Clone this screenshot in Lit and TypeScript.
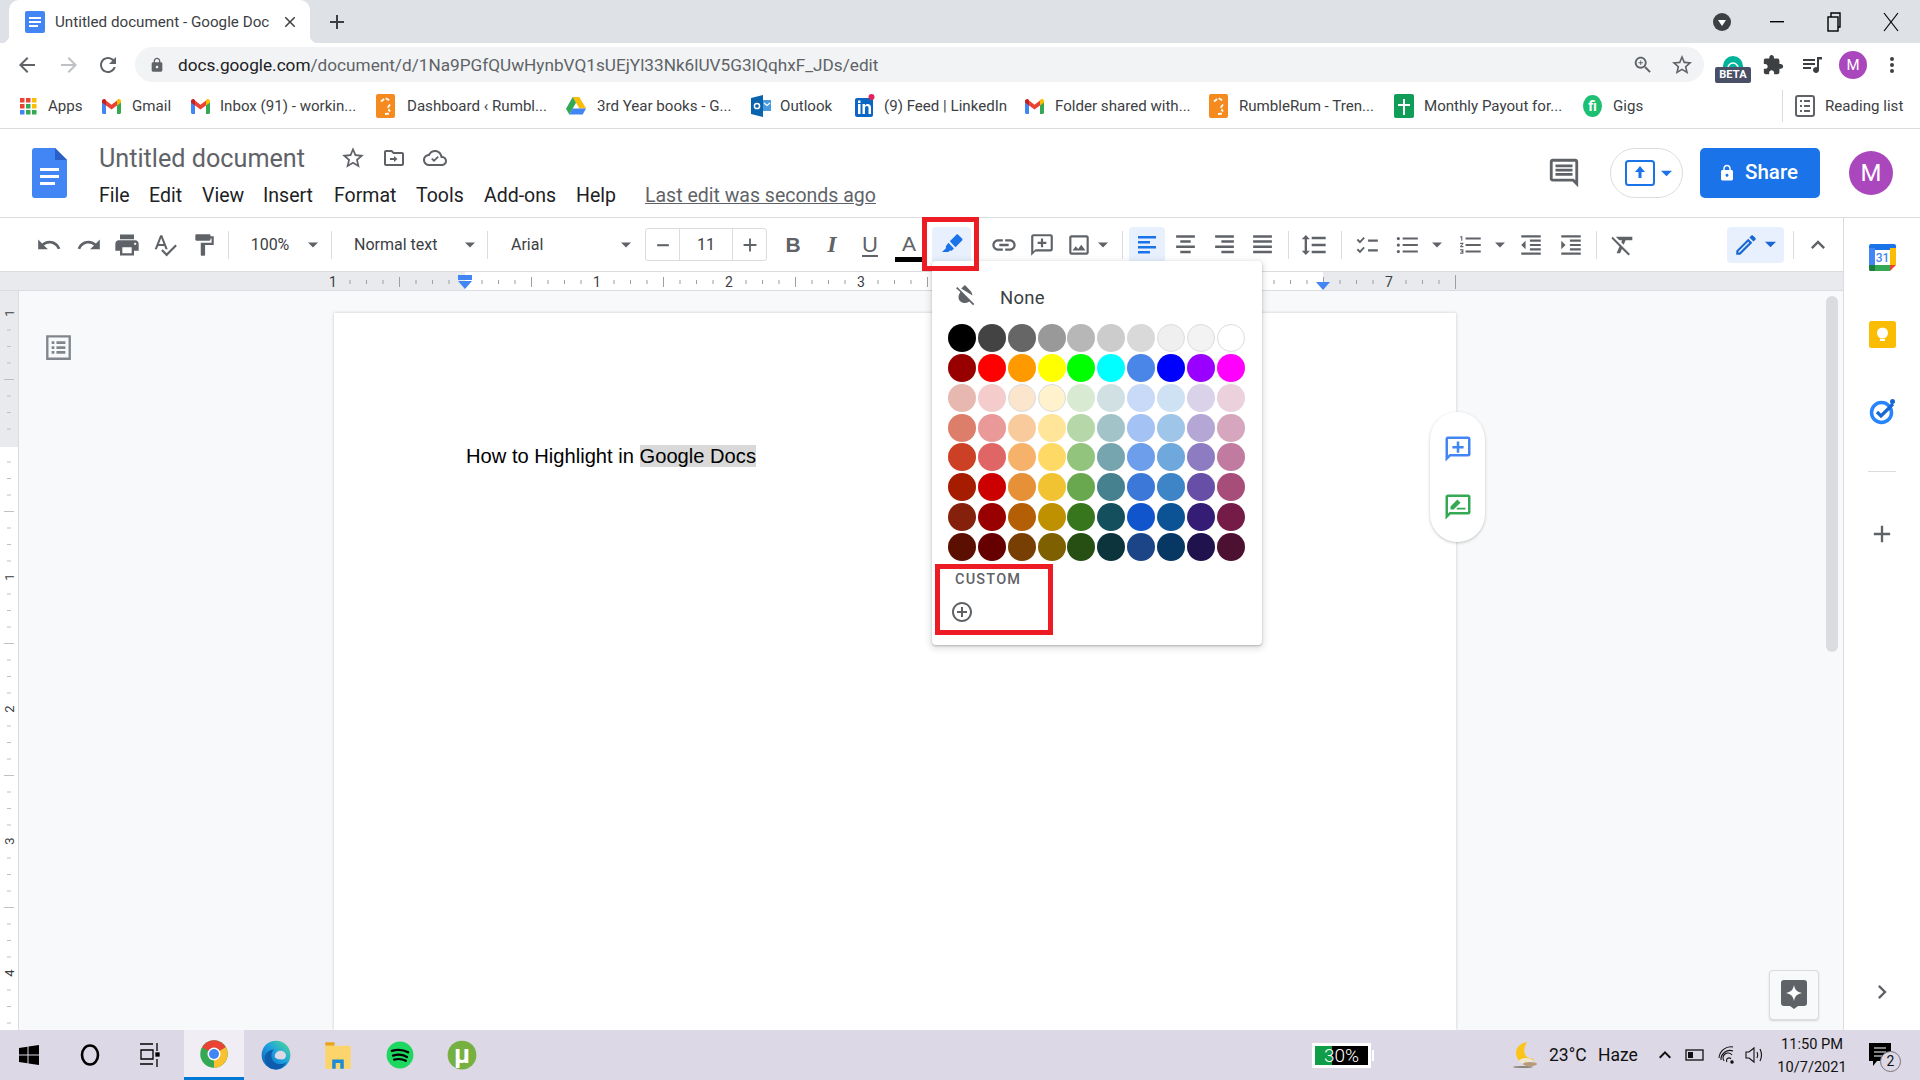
import { LitElement, html, svg, css } from 'lit';
import { customElement } from 'lit/decorators.js';

type Item = { x: number; w: number; c: unknown; cls?: string };

const GRAY = '#5f6368';
const BLUE = '#1a73e8';

// material-ish icon from one path
const ic = (d: string, size = 24, color = GRAY, vb = 24) =>
  html`<svg width=${size} height=${size} viewBox="0 0 ${vb} ${vb}" fill=${color}><path d=${d}></path></svg>`;

const at = (cx: number, w: number, c: unknown, cls = ''): Item => ({ x: cx - w / 2, w, c, cls });

// lays items out in a flex row, the gaps come from the wanted x positions
const flow = (items: Item[], start = 0) => {
  let right = start;
  return items.map((i) => {
    const ml = i.x - right;
    right = i.x + i.w;
    return html`<div class="cell ${i.cls || ''}" style="margin-left:${ml}px;width:${i.w}px">${i.c}</div>`;
  });
};

const P = {
  undo: 'M12.5 8c-2.65 0-5.05.99-6.9 2.6L2 7v9h9l-3.62-3.62c1.39-1.16 3.16-1.88 5.12-1.88 3.54 0 6.55 2.31 7.6 5.5l2.37-.78C21.08 11.03 17.15 8 12.5 8z',
  redo: 'M18.4 10.6C16.55 8.99 14.15 8 11.5 8c-4.65 0-8.58 3.03-9.96 7.22L3.9 16c1.05-3.19 4.05-5.5 7.6-5.5 1.95 0 3.73.72 5.12 1.88L13 16h9V7l-3.6 3.6z',
  print: 'M19 8H5c-1.66 0-3 1.34-3 3v6h4v4h12v-4h4v-6c0-1.66-1.34-3-3-3zm-3 11H8v-5h8v5zm3-7c-.55 0-1-.45-1-1s.45-1 1-1 1 .45 1 1-.45 1-1 1zm-1-9H6v4h12V3z',
  spell: 'M12.45 16h2.09L9.43 3H7.57L2.46 16h2.09l1.12-3h5.64l1.14 3zm-6.02-5L8.5 5.48 10.57 11H6.43zm15.16.59l-8.09 8.09L9.83 16l-1.41 1.41 5.09 5.09L23 13l-1.41-1.41z',
  paint: 'M18 4V3c0-.55-.45-1-1-1H5c-.55 0-1 .45-1 1v4c0 .55.45 1 1 1h12c.55 0 1-.45 1-1V6h1v4H9v11c0 .55.45 1 1 1h2c.55 0 1-.45 1-1v-9h8V4h-3z',
  link: 'M3.9 12c0-1.71 1.39-3.1 3.1-3.1h4V7H7c-2.76 0-5 2.24-5 5s2.24 5 5 5h4v-1.9H7c-1.71 0-3.1-1.39-3.1-3.1zM8 13h8v-2H8v2zm9-6h-4v1.9h4c1.71 0 3.1 1.39 3.1 3.1s-1.39 3.1-3.1 3.1h-4V17h4c2.76 0 5-2.24 5-5s-2.24-5-5-5z',
  comment: 'M20 2H4c-1.1 0-2 .9-2 2v18l4-4h14c1.1 0 2-.9 2-2V4c0-1.1-.9-2-2-2zm0 14H6l-2 2V4h16v12zM11 6h2v3h3v2h-3v3h-2v-3H8V9h3z',
  image: 'M19 5v14H5V5h14m0-2H5c-1.1 0-2 .9-2 2v14c0 1.1.9 2 2 2h14c1.1 0 2-.9 2-2V5c0-1.1-.9-2-2-2zm-4.86 8.86l-3 3.87L9 13.14 6 17h12l-3.86-5.14z',
  alignL: 'M3 3h18v2.4H3zM3 8h12v2.4H3zM3 13h18v2.4H3zM3 18h12v2.4H3z',
  alignC: 'M3 3h18v2.4H3zM7 8h10v2.4H7zM3 13h18v2.4H3zM7 18h10v2.4H7z',
  alignR: 'M3 3h18v2.4H3zM9 8h12v2.4H9zM3 13h18v2.4H3zM9 18h12v2.4H9z',
  justify: 'M3 3h18v2.4H3zM3 8h18v2.4H3zM3 13h18v2.4H3zM3 18h18v2.4H3z',
  spacing: 'M6 7h2.5L5 3.5 1.5 7H4v10H1.5L5 20.5 8.5 17H6V7zm4-2v2h12V5H10zm0 14h12v-2H10v2zm0-6h12v-2H10v2z',
  check: 'M2.5 7.5l1.2-1.2 1.8 1.8 3.3-3.5 1.2 1.2-4.5 4.7zM2.5 16.5l1.2-1.2 1.8 1.8 3.3-3.5 1.2 1.2-4.5 4.7zM13 7h9v2h-9zM13 16h9v2h-9z',
  bullets: 'M4 10.5a1.5 1.5 0 1 0 0 3 1.5 1.5 0 0 0 0-3zm0-6a1.5 1.5 0 1 0 0 3 1.5 1.5 0 0 0 0-3zm0 12a1.5 1.5 0 1 0 0 3 1.5 1.5 0 0 0 0-3zM8 5h14v2H8zm0 6h14v2H8zm0 6h14v2H8z',
  numbers: 'M2 17h2v.5H3v1h1v.5H2v1h3v-4H2v1zm1-9h1V4H2v1h1v3zm-1 3h1.8L2 13.1v.9h3v-1H3.2L5 10.9V10H2v1zm5-6v2h14V5H7zm0 14h14v-2H7v2zm0-6h14v-2H7v2z',
  outdent: 'M11 17h10v-2H11v2zm-8-5l4 4V8l-4 4zm0 9h18v-2H3v2zM3 3v2h18V3H3zm8 6h10V7H11v2zm0 4h10v-2H11v2z',
  indent: 'M3 21h18v-2H3v2zM3 8v8l4-4-4-4zm8 9h10v-2H11v2zM3 3v2h18V3H3zm8 6h10V7H11v2zm0 4h10v-2H11v2z',
  clear: 'M3.27 5L2 6.27l6.97 6.97L6.5 19h3l1.57-3.66L16.73 21 18 19.73 3.55 5.27 3.27 5zM6 5v.18L8.82 8h2.4l-.72 1.68 2.1 2.1L14.21 8H20V5H6z',
  pencil: 'M14.06 9.02l.92.92L5.92 19H5v-.92l9.06-9.06M17.66 3c-.25 0-.51.1-.7.29l-1.83 1.83 3.75 3.75 1.83-1.83c.39-.39.39-1.02 0-1.41l-2.34-2.34c-.2-.2-.45-.29-.71-.29zm-3.6 3.19L3 17.25V21h3.75L17.81 9.94l-3.75-3.75z',
  marker: 'M10 8.6l6-6.1c.5-.5 1.2-.5 1.7 0l3.6 3.6c.5.5.5 1.2 0 1.7l-6.1 6.2zM8.7 10l5.1 5.2-2 2-1.7-.2-1.5 1.5H2.8l3.6-3.6-.1-1.7z',
  star: 'M22 9.24l-7.19-.62L12 2 9.19 8.63 2 9.24l5.46 4.73L5.82 21 12 17.27 18.18 21l-1.63-7.03L22 9.24zM12 15.4l-3.76 2.27 1-4.28-3.32-2.88 4.38-.38L12 6.1l1.71 4.04 4.38.38-3.32 2.88 1 4.28L12 15.4z',
  cloud: 'M19.35 10.04C18.67 6.59 15.64 4 12 4 9.11 4 6.6 5.64 5.35 8.04 2.34 8.36 0 10.91 0 14c0 3.31 2.69 6 6 6h13c2.76 0 5-2.24 5-5 0-2.64-2.05-4.78-4.65-4.96zM19 18H6c-2.21 0-4-1.79-4-4 0-2.05 1.53-3.76 3.56-3.97l1.07-.11.5-.95C8.08 7.14 9.94 6 12 6c2.62 0 4.88 1.86 5.39 4.43l.3 1.5 1.53.11c1.56.1 2.78 1.41 2.78 2.96 0 1.65-1.35 3-3 3zm-8-2l-2.8-2.8 1.2-1.2 1.6 1.6 3.6-3.6 1.2 1.2z',
  move: 'M20 6h-8l-2-2H4c-1.1 0-2 .9-2 2v12c0 1.1.9 2 2 2h16c1.1 0 2-.9 2-2V8c0-1.1-.9-2-2-2zm0 12H4V6h5.17l2 2H20v10zM12 10v2H8v2h4v2l3.5-3z',
  back: 'M20 11H7.83l5.59-5.59L12 4l-8 8 8 8 1.41-1.41L7.83 13H20v-2z',
  fwd: 'M12 4l-1.41 1.41L16.17 11H4v2h12.17l-5.58 5.59L12 20l8-8z',
  reload: 'M17.65 6.35C16.2 4.9 14.21 4 12 4c-4.42 0-7.99 3.58-7.99 8s3.57 8 7.99 8c3.73 0 6.84-2.55 7.73-6h-2.08c-.82 2.33-3.04 4-5.65 4-3.31 0-6-2.69-6-6s2.69-6 6-6c1.66 0 3.14.69 4.22 1.78L13 11h7V4l-2.35 2.35z',
  lock: 'M18 8h-1V6c0-2.76-2.24-5-5-5S7 3.24 7 6v2H6c-1.1 0-2 .9-2 2v10c0 1.1.9 2 2 2h12c1.1 0 2-.9 2-2V10c0-1.1-.9-2-2-2zM9 6c0-1.66 1.34-3 3-3s3 1.34 3 3v2H9V6zm3 11c-1.1 0-2-.9-2-2s.9-2 2-2 2 .9 2 2-.9 2-2 2z',
  zoom: 'M15.5 14h-.79l-.28-.27C15.41 12.59 16 11.11 16 9.5 16 5.91 13.09 3 9.5 3S3 5.91 3 9.5 5.91 16 9.5 16c1.61 0 3.09-.59 4.23-1.57l.27.28v.79l5 4.99L20.49 19l-4.99-5zm-6 0C7.01 14 5 11.99 5 9.5S7.01 5 9.5 5 14 7.01 14 9.5 11.99 14 9.5 14zM12 10h-2v2H9v-2H7V9h2V7h1v2h2z',
  puzzle: 'M20.5 11H19V7c0-1.1-.9-2-2-2h-4V3.5C13 2.12 11.88 1 10.5 1S8 2.12 8 3.5V5H4c-1.1 0-1.99.9-1.99 2v3.8H3.5c1.49 0 2.7 1.21 2.7 2.7s-1.21 2.7-2.7 2.7H2V20c0 1.1.9 2 2 2h3.8v-1.5c0-1.49 1.21-2.7 2.7-2.7 1.49 0 2.7 1.21 2.7 2.7V22H17c1.1 0 2-.9 2-2v-4h1.5c1.38 0 2.5-1.12 2.5-2.5S21.88 11 20.5 11z',
  queue: 'M3 6h12v2H3zM3 10h12v2H3zM3 14h8v2H3zM17 4h5v2.5h-3V17a3 3 0 1 1-2-2.8z',
  dots: 'M12 8a2 2 0 1 0 0-4 2 2 0 0 0 0 4zm0 2a2 2 0 1 0 0 4 2 2 0 0 0 0-4zm0 6a2 2 0 1 0 0 4 2 2 0 0 0 0-4z',
  close: 'M19 6.41L17.59 5 12 10.59 6.41 5 5 6.41 10.59 12 5 17.59 6.41 19 12 13.41 17.59 19 19 17.59 13.41 12z',
  plus: 'M19 13h-6v6h-2v-6H5v-2h6V5h2v6h6z',
  chevUp: 'M12 8l-6 6 1.41 1.41L12 10.83l4.59 4.58L18 14z',
  chevR: 'M10 6L8.59 7.41 13.17 12l-4.58 4.59L10 18l6-6z',
  notes: 'M21.99 4c0-1.1-.89-2-1.99-2H4c-1.1 0-2 .9-2 2v12c0 1.1.9 2 2 2h14l4 4-.01-18zM20 4v13.17L18.83 16H4V4h16zM6 12h12v2H6zm0-3h12v2H6zm0-3h12v2H6z',
  addCircle: 'M13 7h-2v4H7v2h4v4h2v-4h4v-2h-4V7zm-1-5C6.48 2 2 6.48 2 12s4.48 10 10 10 10-4.48 10-10S17.52 2 12 2zm0 18c-4.41 0-8-3.59-8-8s3.59-8 8-8 8 3.59 8 8-3.59 8-8 8z',
  noFill: 'M3 4.3L4.3 3l17 17-1.3 1.3-3.7-3.7c-1 .9-2.5 1.4-4.3 1.4-3.8 0-6.5-2.4-6.5-6 0-1.6.8-3.3 1.9-5zM8.2 4.5L12 1l6 6.5c.8 1.4 1.4 2.8 1.5 4z',
  outline: 'M3 3h18v18H3zm1.7 1.7v14.6h14.6V4.700zM7 7.500h2v2H7zM10.500 7.500H17v2h-6.500zM7 11h2v2H7zM10.500 11H17v2h-6.500zM7 14.500h2v2H7zM10.500 14.500H17v2h-6.500z',
  addPlain: 'M20 2H4a2 2 0 0 0-2 2v18l4-4h14a2 2 0 0 0 2-2V4a2 2 0 0 0-2-2zm0 14H5.2L4 17.2V4h16zM11 6h2v3.5h3.5v2H13V15h-2v-3.5H7.5v-2H11z',
  suggest: 'M20 2H4a2 2 0 0 0-2 2v18l4-4h14a2 2 0 0 0 2-2V4a2 2 0 0 0-2-2zm0 14H5.2L4 17.2V4h16zM6 14v-2.500l5.500-5.500 2.500 2.500L8.500 14zM11 12.500h7V14h-7z',
};

const caret = (color = GRAY, size = 10) =>
  html`<svg width=${size} height=${size} viewBox="0 0 10 10" fill=${color}><path d="M0 2.5h10L5 7.5z"></path></svg>`;

const gmail = html`<svg width="19" height="17" viewBox="0 0 19 15">
  <path d="M0 2v11.5C0 14.3.7 15 1.5 15H4V6z" fill="#4285f4"></path>
  <path d="M19 2v11.500c0 .8-.7 1.500-1.500 1.500H15V6z" fill="#34a853"></path>
  <path d="M4 6.500V1.500L9.500 5.800 15 1.500v5l-5.500 4z" fill="#ea4335"></path>
  <path d="M0 2.200C0 .5 2 -.5 3.300.5L4 1v5.500L0 3.500z" fill="#c5221f"></path>
  <path d="M19 2.200c0-1.700-2-2.700-3.300-1.700L15 1v5.500l4-3z" fill="#fbbc04"></path></svg>`;

const rumble = html`<svg width="19" height="24" viewBox="0 0 19 24">
  <rect width="19" height="24" rx="2" fill="#f58a1f"></rect>
  <path d="M5 7.500L9.500 4l4 2.500M14 10.500l-2.500 3.500 2.500 3.500M9 20l4.500-.5" stroke="#fff" stroke-width="1.800" fill="none" stroke-dasharray="4 2"></path></svg>`;

const drive = html`<svg width="20" height="18" viewBox="0 0 20 18">
  <path d="M6.700 0h6.600L20 11.500h-6.600z" fill="#fbbc04"></path>
  <path d="M6.700 0l3.300 5.700L3.300 17.500 0 11.800z" fill="#34a853"></path>
  <path d="M6.500 11.500H20l-3.300 6H3.300z" fill="#4285f4"></path></svg>`;

const outlook = html`<svg width="20" height="22" viewBox="0 0 20 22">
  <rect x="9" y="5" width="11" height="11" fill="#4a9ae0"></rect>
  <path d="M0 3l12-3v22L0 19z" fill="#0a64ad"></path>
  <circle cx="6" cy="11" r="2.600" fill="none" stroke="#fff" stroke-width="1.500"></circle>
  <path d="M13 8l3 2.500 3-2.500" fill="none" stroke="#fff" stroke-width="1.200"></path></svg>`;

const linkedin = html`<svg width="20" height="24" viewBox="0 0 20 24">
  <rect y="4" width="18" height="19" rx="2" fill="#0a66c2"></rect>
  <circle cx="16.500" cy="3" r="3" fill="#e0245e"></circle>
  <path d="M3 10h2.500v10H3zM3 6.500h2.500V9H3zM7.500 10H10v1.500c.6-1 1.500-1.600 2.700-1.600 2 0 3.300 1.200 3.300 3.700V20h-2.500v-6c0-1.200-.5-1.900-1.600-1.900-1.200 0-1.900.9-1.900 2.200V20H7.500z" fill="#fff"></path></svg>`;

const sheets = html`<svg width="20" height="24" viewBox="0 0 20 24">
  <rect width="20" height="24" rx="2" fill="#0f9d58"></rect>
  <path d="M9 5h2v5h5v2h-5v9H9v-9H4v-2h5z" fill="#fff"></path></svg>`;

const fiverr = html`<svg width="19" height="24" viewBox="0 0 19 24">
  <ellipse cx="9.500" cy="12" rx="9.500" ry="11" fill="#1dbf73"></ellipse>
  <text x="9.500" y="17" text-anchor="middle" font-family="Roboto, sans-serif" font-size="14" font-weight="700" fill="#fff">fi</text></svg>`;

const appsGrid = html`<svg width="17" height="17" viewBox="0 0 17 17">
  ${[0, 6, 12].map((y, r) => [0, 6, 12].map((x, c) => svg`<rect x=${x} y=${y} width="4.500" height="4.500"
    fill=${[['#ea4335', '#ea4335', '#fbbc04'], ['#ea4335', '#34a853', '#fbbc04'], ['#4285f4', '#34a853', '#34a853']][r][c]}></rect>`))}</svg>`;

const marks = [
  { icon: appsGrid, x: 20, ic: 17, tx: 48, tw: 40, t: 'Apps' },
  { icon: gmail, x: 102, ic: 19, tx: 132, tw: 40, t: 'Gmail' },
  { icon: gmail, x: 191, ic: 19, tx: 220, tw: 140, t: 'Inbox (91) - workin...' },
  { icon: rumble, x: 376, ic: 19, tx: 407, tw: 145, t: 'Dashboard ‹ Rumbl...' },
  { icon: drive, x: 566, ic: 20, tx: 597, tw: 140, t: '3rd Year books - G...' },
  { icon: outlook, x: 751, ic: 20, tx: 780, tw: 60, t: 'Outlook' },
  { icon: linkedin, x: 855, ic: 20, tx: 884, tw: 125, t: '(9) Feed | LinkedIn' },
  { icon: gmail, x: 1025, ic: 19, tx: 1055, tw: 140, t: 'Folder shared with...' },
  { icon: rumble, x: 1209, ic: 19, tx: 1239, tw: 140, t: 'RumbleRum - Tren...' },
  { icon: sheets, x: 1394, ic: 20, tx: 1424, tw: 145, t: 'Monthly Payout for...' },
  { icon: fiverr, x: 1583, ic: 19, tx: 1613, tw: 40, t: 'Gigs' },
];

const toolbarItems = (): Item[] => [
  at(49, 26, ic(P.undo, 26)),
  at(88.500, 26, ic(P.redo, 26)),
  at(127, 28, ic(P.print, 28)),
  at(165, 26, ic(P.spell, 26)),
  at(204, 26, ic(P.paint, 26)),
  at(228.5, 1, '', 'sep'),
  at(270, 44, '100%', 'tb-text'),
  at(313, 10, caret()),
  at(331.5, 1, '', 'sep'),
  { x: 354, w: 90, c: 'Normal text', cls: 'tb-text left' },
  at(470, 10, caret()),
  at(487.5, 1, '', 'sep'),
  { x: 511, w: 50, c: 'Arial', cls: 'tb-text left' },
  at(626, 10, caret()),
  {
    x: 645, w: 122, cls: 'stepper',
    c: html`<div class="st-btn">${ic('M5 11h14v2.500H5z', 20)}</div><div class="st-val">11</div><div class="st-btn">${ic(P.plus, 22)}</div>`,
  },
  at(793, 24, 'B', 'fmt bold'),
  at(832, 24, 'I', 'fmt italic'),
  at(870, 24, 'U', 'fmt under'),
  at(909, 28, html`<div class="color-a"><span>A</span><i></i></div>`),
  at(951.5, 39, ic(P.marker, 26, BLUE), 'active tall'),
  at(1004, 28, ic(P.link, 28)),
  at(1042, 26, ic(P.comment, 26)),
  at(1079, 26, ic(P.image, 26)),
  at(1103, 10, caret()),
  at(1122.5, 1, '', 'sep'),
  at(1147, 36, ic(P.alignL, 24, BLUE), 'active'),
  at(1185, 26, ic(P.alignC, 25)),
  at(1224, 26, ic(P.alignR, 25)),
  at(1262, 26, ic(P.justify, 25)),
  at(1288.5, 1, '', 'sep'),
  at(1314, 28, ic(P.spacing, 28)),
  at(1341.5, 1, '', 'sep'),
  at(1367, 26, ic(P.check, 26)),
  at(1407, 26, ic(P.bullets, 26)),
  at(1437, 10, caret()),
  at(1471, 26, ic(P.numbers, 26)),
  at(1500, 10, caret()),
  at(1531, 26, ic(P.outdent, 26)),
  at(1571, 26, ic(P.indent, 26)),
  at(1596.5, 1, '', 'sep'),
  at(1623, 28, ic(P.clear, 28)),
  {
    x: 1727, w: 57, cls: 'active mode',
    c: html`${ic(P.pencil, 26, '#1967d2')}${caret('#1967d2', 11)}`,
  },
  at(1793.5, 1, '', 'sep'),
  at(1818, 28, ic(P.chevUp, 28)),
];

const swatches = [
  '000000 434343 666666 999999 b7b7b7 cccccc d9d9d9 efefef f3f3f3 ffffff',
  '980000 ff0000 ff9900 ffff00 00ff00 00ffff 4a86e8 0000ff 9900ff ff00ff',
  'e6b8af f4cccc fce5cd fff2cc d9ead3 d0e0e3 c9daf8 cfe2f3 d9d2e9 ead1dc',
  'dd7e6b ea9999 f9cb9c ffe599 b6d7a8 a2c4c9 a4c2f4 9fc5e8 b4a7d6 d5a6bd',
  'cc4125 e06666 f6b26b ffd966 93c47d 76a5af 6d9eeb 6fa8dc 8e7cc3 c27ba0',
  'a61c00 cc0000 e69138 f1c232 6aa84f 45818e 3c78d8 3d85c6 674ea7 a64d79',
  '85200c 990000 b45f06 bf9000 38761d 134f5c 1155cc 0b5394 351c75 741b47',
  '5b0f00 660000 783f04 7f6000 274e13 0c343d 1c4587 073763 20124d 4c1130',
].join(' ').split(' ');
const ringed = ['efefef', 'f3f3f3', 'ffffff', 'fce5cd', 'fff2cc'];

const hRuler = () => {
  const ticks = [];
  for (let i = 1; i < 68; i++) {
    if (i % 8 === 0) continue;
    const x = 333 + i * 16.5;
    const long = i % 8 === 4;
    ticks.push(svg`<rect x=${x} y=${long ? 5 : 8} width="1" height=${long ? 10 : 4} fill="#9aa0a6"></rect>`);
  }
  const nums: [number, string][] = [[333, '1'], [597, '1'], [729, '2'], [861, '3'], [1389, '7']];
  return html`<svg width="1843" height="20" viewBox="0 0 1843 20">
    <rect x="465" width="858" height="20" fill="#fff"></rect>
    ${ticks}
    <rect x="1455" y="3" width="1" height="14" fill="#9aa0a6"></rect>
    ${nums.map(([x, t]) => svg`<text x=${x} y="15" text-anchor="middle" font-family="Roboto, sans-serif" font-size="14" fill="#3c4043">${t}</text>`)}
    <path d="M458 3h14v5h-14zM458 9h14l-7 8z" fill="#4285f4"></path>
    <path d="M1316 10h14l-7 8z" fill="#4285f4"></path>
  </svg>`;
};

const vRuler = () => {
  const ticks = [];
  for (let i = 1; i < 44; i++) {
    if (i % 8 === 0) continue;
    const y = 22 + i * 16.5;
    const long = i % 8 === 4;
    ticks.push(svg`<rect x=${long ? 4 : 7} y=${y} width=${long ? 10 : 4} height="1" fill="#bdc1c6"></rect>`);
  }
  return html`<svg width="18" height="739" viewBox="0 0 18 739">
    <rect width="18" height="156" fill="#e8eaed"></rect>
    ${ticks}
    <text transform="translate(14 22) rotate(-90)" text-anchor="middle" font-family="Roboto, sans-serif" font-size="13" fill="#3c4043">1</text>
    ${[1, 2, 3, 4].map((n) => svg`<text transform="translate(14 ${154 + 132 * n}) rotate(-90)" text-anchor="middle" font-family="Roboto, sans-serif" font-size="13" fill="#3c4043">${n}</text>`)}
  </svg>`;
};

const chrome = html`<svg width="30" height="32" viewBox="0 0 24 24">
  <circle cx="12" cy="12" r="11" fill="#34a853"></circle>
  <path d="M12 12L2.500 6.500A11 11 0 0 1 21.500 6.500z" fill="#ea4335"></path>
  <path d="M12 12l9.500-5.500A11 11 0 0 1 12 23z" fill="#fbc02d"></path>
  <circle cx="12" cy="12" r="5.200" fill="#fff"></circle><circle cx="12" cy="12" r="4" fill="#4285f4"></circle></svg>`;

const edge = html`<svg width="30" height="36" viewBox="0 0 24 24">
  <defs><linearGradient id="eg" x1="0" y1="1" x2="1" y2="0"><stop offset="0" stop-color="#0c59a4"></stop><stop offset=".5" stop-color="#1b9de2"></stop><stop offset="1" stop-color="#4fe08f"></stop></linearGradient></defs>
  <circle cx="12" cy="12" r="11.500" fill="url(#eg)"></circle>
  <path d="M11 13c0-2.500 2-4.500 4.500-4.500 2.700 0 4.500 1.800 4.500 3.800 0 2-1.500 3.200-3.500 3.200-3.500 0-5.500-1-5.500-2.500z" fill="#ddd8e5"></path>
  <path d="M3 14c.5-4 4-6.500 7.500-6.500-2.500 2-3.500 7 .5 10.500 2 1.500 6 2 9.500-.5-2 4-5.500 6-9 6-5 0-8.500-4.500-8.500-9.500z" fill="#0d5cad"></path></svg>`;

const folder = html`<svg width="28" height="30" viewBox="0 0 24 26">
  <path d="M1 2h8v3H1z" fill="#e8a317"></path>
  <path d="M1 5h22v20H1z" fill="#fbd56b"></path>
  <path d="M7 25v-8h10v8h-3v-5h-4v5z" fill="#1f8ad6"></path></svg>`;

const spotify = html`<svg width="28" height="32" viewBox="0 0 24 24">
  <circle cx="12" cy="12" r="11.500" fill="#1ed760"></circle>
  <path d="M5 8.500c5-1.500 10-1 14 1.200M6 12.500c4-1.200 8.500-.8 12 1.200M7 16c3.500-1 7-.6 10 1" stroke="#000" stroke-width="1.900" stroke-linecap="round" fill="none"></path></svg>`;

const utorrent = html`<svg width="30" height="34" viewBox="0 0 24 24">
  <circle cx="12" cy="12" r="11.500" fill="#76b041"></circle>
  <text x="12" y="18" text-anchor="middle" font-family="Roboto, sans-serif" font-size="21" font-weight="700" fill="#fff">µ</text></svg>`;

const windows = html`<svg width="20" height="20" viewBox="0 0 20 20"><path d="M0 3l8.500-1.300V9.500H0zM9.500 1.500L20 0v9.500H9.500zM0 10.500h8.500v7.800L0 17zM9.500 10.500H20V20L9.500 18.500z" fill="#000"></path></svg>`;

const moon = html`<svg width="30" height="30" viewBox="0 0 30 30">
  <path d="M18 2c-3 5-4 10-1 14 2 2 5 3 8 3-2 3-6 5-10 4-5-1-8-5-8-10 0-5 4-10 11-11z" fill="#fcc419"></path>
  <ellipse cx="17" cy="21" rx="7" ry="3" fill="#efe6d2"></ellipse><ellipse cx="21" cy="24" rx="7" ry="2" fill="#b89b78"></ellipse>
  <ellipse cx="14" cy="27" rx="10" ry="1" fill="#8d8577"></ellipse></svg>`;

const calendar = html`<svg width="27" height="27" viewBox="0 0 27 27">
  <rect width="27" height="27" rx="2" fill="#fff"></rect>
  <path d="M0 2a2 2 0 0 1 2-2h23a2 2 0 0 1 2 2v4H0z" fill="#1a73e8"></path>
  <path d="M0 4h6v23H2a2 2 0 0 1-2-2z" fill="#4285f4"></path>
  <path d="M21 4h6v17h-6z" fill="#fbbc04"></path>
  <path d="M0 21h21v6H2a2 2 0 0 1-2-2z" fill="#34a853"></path>
  <path d="M0 21h6v6H2a2 2 0 0 1-2-2z" fill="#188038"></path>
  <path d="M21 21h6l-6 6z" fill="#ea4335"></path>
  <text x="13.500" y="18" text-anchor="middle" font-family="Roboto, sans-serif" font-size="12" font-weight="500" fill="#4285f4">31</text></svg>`;

const keep = html`<svg width="27" height="27" viewBox="0 0 27 27">
  <rect width="27" height="27" rx="2.500" fill="#fbbc04"></rect>
  <circle cx="13.500" cy="12" r="5.500" fill="#fff"></circle><rect x="11" y="18" width="5" height="2" fill="#fff"></rect></svg>`;

const tasks = html`<svg width="27" height="27" viewBox="0 0 27 27">
  <circle cx="12.500" cy="14.500" r="10" fill="none" stroke="#2684fc" stroke-width="3.500"></circle>
  <path d="M8 14l4 4 12-12" fill="none" stroke="#1967d2" stroke-width="3.200"></path>
  <circle cx="23.500" cy="3.500" r="2.500" fill="#1967d2"></circle></svg>`;

@customElement('app-root')
export class AppRoot extends LitElement {
  static styles = css`
    :host {
      display: flex;
      flex-direction: column;
      position: relative;
      width: 1920px;
      height: 1080px;
      overflow: hidden;
      background: #fff;
      font-family: Roboto, 'Noto Sans', sans-serif;
      color: #3c4043;
    }
    svg { display: block; flex: none; }
    .cell {
      flex: none;
      display: flex;
      align-items: center;
      justify-content: center;
      white-space: nowrap;
    }
    .row { display: flex; align-items: center; }

    /* chrome */
    .tabstrip { height: 43px; background: #dee1e6; flex: none; }
    .tab {
      height: 43px;
      align-self: flex-end;
      background: #fff;
      border-radius: 10px 10px 0 0;
      position: relative;
      justify-content: flex-start;
      font-size: 15.2px;
      color: #3c4043;
    }
    .tab::before, .tab::after {
      content: '';
      position: absolute;
      bottom: 0;
      width: 8px;
      height: 8px;
    }
    .tab::before { left: -8px; background: radial-gradient(circle at 0 0, transparent 8px, #fff 8.5px); }
    .tab::after { right: -8px; background: radial-gradient(circle at 100% 0, transparent 8px, #fff 8.5px); }
    .fav { margin-left: 16px; margin-right: 10px; }
    .tab-title { width: 217px; overflow: hidden; margin-right: 9px; }
    .navbar { height: 43px; flex: none; }
    .omni {
      height: 35px;
      background: #f1f3f4;
      border-radius: 18px;
      justify-content: flex-start;
      font-size: 17.2px;
      color: #5f6368;
    }
    .omni .lock { margin: 0 13px 0 14px; }
    .omni b { font-weight: 400; color: #202124; }
    .omni .grow { flex: 1; }
    .omni .star { margin: 0 10px 0 16px; }
    .beta { position: relative; height: 36px; align-items: flex-start; }
    .beta svg { margin-top: 8px; }
    .beta span {
      position: absolute;
      left: -3px;
      right: -3px;
      bottom: 0;
      height: 16px;
      background: #4a4f68;
      border-radius: 2px;
      color: #fff;
      font-size: 11px;
      line-height: 16px;
      font-weight: 700;
      text-align: center;
      letter-spacing: .2px;
    }
    .avatar-s {
      height: 28px;
      border-radius: 50%;
      background: #ab47bc;
      color: #fff;
      font-size: 15px;
    }
    .bookmarks {
      height: 40px;
      padding-bottom: 2px;
      flex: none;
      border-bottom: 1px solid #dadce0;
      font-size: 15.1px;
      color: #3c4043;
    }
    .mark { justify-content: flex-start; }
    .sep-b { height: 32px; background: #dadce0; }

    /* docs header */
    .head { height: 88px; flex: none; border-bottom: 1px solid #dadce0; }
    .head-title { font-size: 25.2px; color: #5f6368; justify-content: flex-start; }
    .menu { font-size: 19.5px; color: #202124; justify-content: flex-start; }
    .last { color: #5f6368; text-decoration: underline; }
    .logo { flex: none; margin-left: 32px; }
    .docs-meta { width: 1100px; margin-left: 32px; flex: none; align-self: flex-start; }
    .head-top { height: 58px; }
    .head-bottom { height: 16px; }
    .pill {
      height: 50px;
      box-sizing: border-box;
      border: 1px solid #dadce0;
      border-radius: 25px;
      gap: 6px;
      padding-left: 4px;
    }
    .share {
      height: 50px;
      border-radius: 5px;
      background-color: #1a73e8;
      color: #fff;
      font-size: 20.5px;
      font-weight: 500;
      gap: 9px;
      padding-right: 4px;
      box-sizing: border-box;
    }
    .share span { margin-top: -2px; }
    .avatar {
      height: 44px;
      border-radius: 50%;
      background: #ab47bc;
      color: #fff;
      font-size: 24px;
    }

    /* toolbar */
    .work { flex: 1; display: flex; min-height: 0; }
    .main { width: 1843px; flex: none; display: flex; flex-direction: column; }
    .toolbar { height: 53px; flex: none; border-bottom: 1px solid #dadce0; }
    .sep { height: 28px; background: #dadce0; }
    .tb-text { font-size: 16px; color: #3c4043; }
    .left { justify-content: flex-start; }
    .stepper {
      height: 33px;
      box-sizing: border-box;
      border: 1px solid #dadce0;
      border-radius: 3px;
      justify-content: flex-start;
    }
    .st-btn { width: 33px; display: flex; justify-content: center; }
    .st-val {
      width: 54px;
      box-sizing: border-box;
      height: 31px;
      line-height: 31px;
      text-align: center;
      border-left: 1px solid #dadce0;
      border-right: 1px solid #dadce0;
      font-size: 16px;
    }
    .fmt { font-family: 'Liberation Sans', Arial, sans-serif; font-size: 21px; color: #5f6368; font-weight: 700; }
    .italic { font-style: italic; font-family: 'Liberation Serif', serif; font-size: 24px; }
    .under { text-decoration: underline; font-weight: 400; font-size: 22px; text-underline-offset: 3px; }
    .color-a { display: flex; flex-direction: column; align-items: center; height: 34px; margin-top: 6px; }
    .color-a span { font-family: 'Liberation Sans', Arial, sans-serif; font-size: 21px; line-height: 26px; color: #5f6368; }
    .color-a i { display: block; width: 28px; height: 5px; background: #000; }
    .active { height: 36px; background: #e8f0fe; border-radius: 4px; }
    .mode { gap: 6px; padding-right: 2px; box-sizing: border-box; }

    /* ruler */
    .ruler { height: 18px; flex: none; background: #e8eaed; border-bottom: 1px solid #dadce0; overflow: hidden; }
    .canvas { flex: 1; display: flex; background: #f8f9fa; position: relative; min-height: 0; overflow: hidden; }
    .vruler { width: 18px; flex: none; background: #fff; border-right: 1px solid #dadce0; }
    .page {
      width: 1122px;
      margin-left: 315px;
      margin-top: 22px;
      background: #fff;
      box-shadow: 0 0 3px rgba(60, 64, 67, .25);
      box-sizing: border-box;
      padding: 130px 0 0 132px;
      font-family: 'Liberation Sans', Arial, sans-serif;
      font-size: 20.15px;
      line-height: 26px;
      color: #000;
    }
    .page mark { background: #d9d9d9; color: #000; }
    .outline-btn { position: absolute; left: 42px; top: 40px; }
    .scrollbar {
      position: absolute;
      left: 1826px;
      top: 5px;
      width: 12px;
      height: 356px;
      border-radius: 6px;
      background: #dadce0;
    }
    .float {
      position: absolute;
      left: 1430px;
      top: 121px;
      width: 55px;
      height: 130px;
      padding: 2px 0 0 1px;
      box-sizing: border-box;
      border-radius: 28px;
      background: #fff;
      box-shadow: 0 1px 3px rgba(60, 64, 67, .3);
      display: flex;
      flex-direction: column;
      align-items: center;
      justify-content: center;
      gap: 28px;
    }
    .explore {
      position: absolute;
      left: 1769px;
      top: 679px;
      width: 50px;
      height: 50px;
      box-sizing: border-box;
      border: 1px solid #dadce0;
      border-radius: 4px;
      background: #f8f9fa;
      box-shadow: 0 1px 2px rgba(60, 64, 67, .2);
      display: flex;
      align-items: center;
      justify-content: center;
    }

    /* sidebar */
    .side {
      flex: 1;
      border-left: 1px solid #dadce0;
      display: flex;
      flex-direction: column;
      align-items: center;
      padding: 26px 0 24px;
      gap: 50px;
    }
    .side hr { width: 28px; height: 1px; border: 0; background: #dadce0; margin: -4px 0 -2px; flex: none; }
    .side .end { margin-top: auto; }

    /* highlight popup */
    .popup {
      position: absolute;
      left: 932px;
      top: 261px;
      width: 330px;
      height: 384px;
      background: #fff;
      border-radius: 4px;
      box-shadow: 0 2px 6px 2px rgba(60, 64, 67, .15), 0 1px 2px rgba(60, 64, 67, .3);
      box-sizing: border-box;
      padding: 0 16px;
      z-index: 2;
    }
    .none { height: 63px; display: flex; align-items: center; font-size: 18.5px; color: #3c4043; padding: 7px 0 0 5px; box-sizing: border-box; }
    .none span { margin: 3px 0 0 23px; letter-spacing: .3px; }
    .swatches { display: grid; grid-template-columns: repeat(10, 28px); gap: 1.85px; }
    .sw { width: 28px; height: 28px; border-radius: 50%; box-sizing: border-box; }
    .sw.ring { border: 1px solid #dadce0; }
    .custom-label {
      margin: 12px 0 0 7px;
      font-size: 14.5px;
      line-height: 14px;
      font-weight: 500;
      letter-spacing: 1.2px;
      color: #5f6368;
    }
    .custom-add { margin: 13px 0 0 2px; }
    .callout { position: absolute; border: 5px solid #ed1c24; box-sizing: border-box; z-index: 3; }
    .callout.pen { left: 922px; top: 217px; width: 57px; height: 54px; }
    .callout.cust { left: 935px; top: 564px; width: 118px; height: 71px; }

    /* taskbar */
    .taskbar { height: 50px; flex: none; background: #ddd8e5; font-size: 17.5px; color: #111; }
    .tile { height: 50px; background: #f0edf4; box-sizing: border-box; border-bottom: 3px solid #0078d4; }
    .clock { height: 50px; flex-direction: column; font-size: 14.6px; line-height: 23px; padding-top: 2px; box-sizing: border-box; }
    .batt {
      height: 25px;
      box-sizing: border-box;
      border: 3px solid #fff;
      background: linear-gradient(90deg, #0f9d48 0 33%, #000 33% 100%);
      color: #fff;
      font-size: 19px;
      font-weight: 300;
      position: relative;
    }
    .batt::after {
      content: '';
      position: absolute;
      right: -6px;
      top: 4px;
      width: 2px;
      height: 11px;
      background: #fff;
    }
    .note { position: relative; height: 44px; }
    .badge {
      position: absolute;
      left: 12px;
      top: 18px;
      width: 21px;
      height: 21px;
      border-radius: 50%;
      box-sizing: border-box;
      border: 1px solid #77737c;
      background: #ddd8e5;
      text-align: center;
      font-size: 14px;
      line-height: 19px;
    }
  `;

  render() {
    return html`
      <div class="row tabstrip">
        ${flow([
          {
            x: 9, w: 301, cls: 'tab',
            c: html`<svg class="fav" width="20" height="22" viewBox="0 0 20 22"><rect width="20" height="22" rx="2" fill="#4285f4"></rect><path d="M4 6h12v2H4zM4 10h12v2H4zM4 14h9v2H4z" fill="#fff"></path></svg>
              <div class="tab-title">Untitled document - Google Doc</div>${ic(P.close, 18, '#3c4043')}`,
          },
          at(337, 24, ic(P.plus, 24, '#3c4043')),
          at(1722, 20, html`<svg width="20" height="20" viewBox="0 0 20 20"><circle cx="10" cy="10" r="9" fill="#3c4043"></circle><path d="M6 8h8l-4 6z" fill="#fff"></path></svg>`),
          at(1778, 16, html`<svg width="16" height="2" viewBox="0 0 16 2"><rect width="14" height="1.4" fill="#000"></rect></svg>`),
          at(1834, 16, html`<svg width="16" height="20" viewBox="0 0 16 20" fill="none" stroke="#000" stroke-width="1.4"><rect x="2" y="5" width="10" height="14"></rect><path d="M5 5V1h9v14h-2"></path></svg>`),
          at(1891, 20, html`<svg width="20" height="20" viewBox="0 0 20 20" stroke="#000" stroke-width="1.2"><path d="M3 1l14 18M17 1L3 19"></path></svg>`),
        ])}
      </div>

      <div class="row navbar">
        ${flow([
          at(27, 24, ic(P.back, 24)),
          at(69, 24, ic(P.fwd, 24, '#bdc1c6')),
          at(108, 24, ic(P.reload, 24)),
          {
            x: 135, w: 1569, cls: 'omni',
            c: html`<div class="lock">${ic(P.lock, 16)}</div>
              <span><b>docs.google.com</b>/document/d/1Na9PGfQUwHynbVQ1sUEjYl33Nk6lUV5G3IQqhxF_JDs/edit</span>
              <div class="grow"></div>
              <div class="zoom">${ic(P.zoom, 22)}</div>
              <div class="star">${ic(P.star, 24)}</div>`,
          },
          at(1733, 30, html`<svg width="22" height="22" viewBox="0 0 22 22"><path d="M1 20V11a10 10 0 0 1 20 0v9z" fill="#00b39b"></path><path d="M6 13a5 5 0 0 1 10 0" fill="none" stroke="#fff" stroke-width="1.6"></path></svg><span>BETA</span>`, 'beta'),
          at(1773, 24, ic(P.puzzle, 22, '#3c4043')),
          at(1812, 24, ic(P.queue, 24, '#3c4043')),
          at(1853, 28, 'M', 'avatar-s'),
          at(1892, 24, ic(P.dots, 24, '#3c4043')),
        ])}
      </div>

      <div class="row bookmarks">
        ${flow([
          ...marks.flatMap((m) => [
            { x: m.x, w: m.ic, c: m.icon, cls: 'mark' },
            { x: m.tx, w: m.tw, c: m.t, cls: 'mark' },
          ]),
          at(1782.5, 1, '', 'sep-b'),
          at(1805, 22, html`<svg width="20" height="22" viewBox="0 0 20 22" fill="none" stroke="#5f6368" stroke-width="2"><rect x="1" y="1" width="18" height="20" rx="2"></rect><path d="M5 6h2M9 6h6M5 11h2M9 11h6M5 16h2M9 16h6"></path></svg>`),
          { x: 1825, w: 85, c: 'Reading list', cls: 'mark' },
        ])}
      </div>

      <div class="row head">
        <div class="logo"><svg width="35" height="50" viewBox="0 0 35 50">
          <path d="M3 0h20l12 12v35a3 3 0 0 1-3 3H3a3 3 0 0 1-3-3V3a3 3 0 0 1 3-3z" fill="#4285f4"></path>
          <path d="M23 0l12 12H23z" fill="#2a5fc9"></path>
          <path d="M8 20h19v3H8zM8 27h19v3H8zM8 34h15v3H8z" fill="#fff"></path></svg></div>
        <div class="docs-meta">
          <div class="row head-top">
            ${flow([
              { x: 99, w: 225, c: 'Untitled document', cls: 'head-title' },
              at(353, 26, ic(P.star, 26)),
              at(394, 24, ic(P.move, 24)),
              at(435, 26, ic(P.cloud, 24)),
            ], 99)}
          </div>
          <div class="row head-bottom">
            ${flow([
              { x: 99, w: 36, c: 'File', cls: 'menu' },
              { x: 149, w: 40, c: 'Edit', cls: 'menu' },
              { x: 202, w: 46, c: 'View', cls: 'menu' },
              { x: 263, w: 56, c: 'Insert', cls: 'menu' },
              { x: 334, w: 64, c: 'Format', cls: 'menu' },
              { x: 416, w: 52, c: 'Tools', cls: 'menu' },
              { x: 484, w: 76, c: 'Add-ons', cls: 'menu' },
              { x: 576, w: 44, c: 'Help', cls: 'menu' },
              { x: 645, w: 240, c: html`<span class="last">Last edit was seconds ago</span>`, cls: 'menu' },
            ], 99)}
          </div>
        </div>
        ${flow([
          at(1564, 32, ic(P.notes, 34)),
          {
            x: 1610, w: 73, cls: 'pill',
            c: html`<svg width="30" height="26" viewBox="0 0 30 26"><rect x="1" y="1" width="28" height="24" rx="2.5" fill="none" stroke="#1a73e8" stroke-width="2"></rect><path d="M15 6l5 6h-3.5v6h-3v-6H10z" fill="#1a73e8"></path></svg>${caret(BLUE, 11)}`,
          },
          {
            x: 1700, w: 120, cls: 'share',
            c: html`${ic(P.lock, 18, '#fff')}<span>Share</span>`,
          },
          at(1871, 44, 'M', 'avatar'),
        ], 1199)}
      </div>

      <div class="work">
        <div class="main">
          <div class="row toolbar">${flow(toolbarItems())}</div>
          <div class="ruler">${hRuler()}</div>
          <div class="canvas">
            <div class="vruler">${vRuler()}</div>
            <div class="page">How to Highlight in <mark>Google Docs</mark></div>
            <div class="outline-btn">${ic(P.outline, 33, '#80868b')}</div>
            <div class="scrollbar"></div>
            <div class="float">
              ${ic(P.addPlain, 30, '#4285f4')}
              ${ic(P.suggest, 30, '#34a853')}
            </div>
            <div class="explore">
              <svg width="26" height="30" viewBox="0 0 26 30">
                <path d="M3 0h20a3 3 0 0 1 3 3v20a3 3 0 0 1-3 3h-6l-4 3-4-3H3a3 3 0 0 1-3-3V3a3 3 0 0 1 3-3z" fill="#5f6368"></path>
                <path d="M13 5c1 5 3 7 8 8-5 1-7 3-8 8-1-5-3-7-8-8 5-1 7-3 8-8z" fill="#fff"></path></svg>
            </div>
          </div>
        </div>
        <div class="side">
          ${calendar}${keep}${tasks}
          <hr />
          ${ic(P.plus, 28)}
          <div class="end">${ic(P.chevR, 28, '#5f6368')}</div>
        </div>
      </div>

      <div class="row taskbar">
        ${flow([
          at(29, 20, windows),
          at(90, 20, html`<svg width="20" height="24" viewBox="0 0 20 24"><ellipse cx="10" cy="12" rx="8" ry="9.5" fill="none" stroke="#000" stroke-width="2.6"></ellipse></svg>`),
          at(150, 20, html`<svg width="20" height="28" viewBox="0 0 20 28" fill="none" stroke="#000" stroke-width="1.3"><path d="M0 3h13M1 9h12v9H1zM0 23h13M17 2v8M17 18v8"></path><rect x="16" y="12" width="3" height="3" fill="#000"></rect></svg>`),
          { x: 184, w: 60, c: chrome, cls: 'tile' },
          at(276, 30, edge),
          at(338, 28, folder),
          at(400, 28, spotify),
          at(462, 30, utorrent),
          { x: 1312, w: 59, c: '30%', cls: 'batt' },
          at(1524, 30, moon),
          { x: 1549, w: 40, c: '23°C', cls: 'left' },
          { x: 1598, w: 40, c: 'Haze', cls: 'left' },
          at(1665, 18, ic(P.chevUp, 24, '#111')),
          at(1695, 20, html`<svg width="20" height="12" viewBox="0 0 20 12" fill="none" stroke="#111" stroke-width="1.3"><rect x="1" y="1" width="17" height="10"></rect><rect x="3" y="3" width="5" height="6" fill="#111" stroke="none"></rect></svg>`),
          at(1726, 20, html`<svg width="20" height="20" viewBox="0 0 20 20" fill="none" stroke="#111" stroke-width="1.1"><path d="M3 13a12 12 0 0 1 14-11M5 15a9 9 0 0 1 12-9M8 16a5 5 0 0 1 8-6M11 17a2 2 0 0 1 4-3"></path><circle cx="16" cy="17" r="1.2" fill="#111"></circle></svg>`),
          at(1755, 20, html`<svg width="20" height="20" viewBox="0 0 20 20" fill="none" stroke="#111" stroke-width="1.1"><path d="M1 7h3l5-4v14l-5-4H1zM12 7c1 2 1 4 0 6M15 4c2 4 2 8 0 12"></path></svg>`),
          { x: 1770, w: 84, cls: 'clock', c: html`<div>11:50 PM</div><div>10/7/2021</div>` },
          {
            x: 1868, w: 24, cls: 'note',
            c: html`<svg width="22" height="24" viewBox="0 0 22 24"><path d="M0 0h22v18H8l-4 5v-5H0z" fill="#000"></path><path d="M5 5h12M5 9h12M5 13h8" stroke="#fff" stroke-width="1.2"></path></svg><div class="badge">2</div>`,
          },
        ])}
      </div>

      <div class="popup">
        <div class="none">${ic(P.noFill, 24)}<span>None</span></div>
        <div class="swatches">
          ${swatches.map((c) => html`<div class="sw ${ringed.includes(c) ? 'ring' : ''}" style="background:#${c}"></div>`)}
        </div>
        <div class="custom-label">CUSTOM</div>
        <div class="custom-add">${ic(P.addCircle, 24)}</div>
      </div>
      <div class="callout pen"></div>
      <div class="callout cust"></div>
    `;
  }
}
